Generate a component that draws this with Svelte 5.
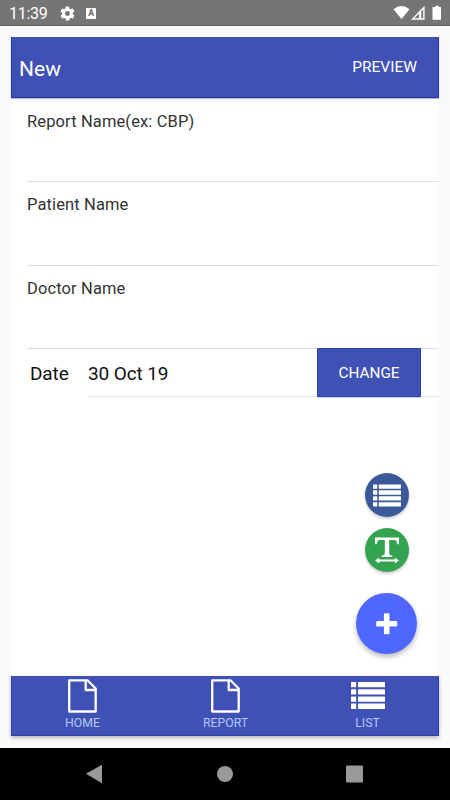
<script>
  const fields = ['Report Name(ex: CBP)', 'Patient Name', 'Doctor Name'];
  const tabs = [
    { label: 'HOME', icon: 'file' },
    { label: 'REPORT', icon: 'file' },
    { label: 'LIST', icon: 'list' }
  ];
</script>

{#snippet listIcon(width, height)}
  <svg {width} {height} viewBox="0 0 34 27" fill="#fff">
    {#each [0, 7.2, 14.4, 21.6] as y}
      <rect x="0" {y} width="5.2" height="5.3" rx=".5" />
      <rect x="7" {y} width="27" height="5.3" rx=".5" />
    {/each}
  </svg>
{/snippet}

<div class="screen">
  <div class="status">
    <span class="clock">11:39</span>
    <svg class="gear" width="17" height="17" viewBox="0 0 24 24" fill="#fff">
      <path d="M19.4 13c0-.3.1-.6.1-1s0-.7-.1-1l2.1-1.6c.2-.2.2-.4.1-.6l-2-3.5c-.1-.2-.4-.3-.6-.2l-2.5 1c-.5-.4-1.100-.7-1.700-1l-.4-2.600c0-.3-.2-.5-.5-.5h-4c-.2 0-.4.2-.5.4l-.4 2.700c-.6.200-1.200.600-1.700 1l-2.500-1c-.2-.1-.5 0-.6.200l-2 3.500c-.1.200-.1.400.1.600L4.600 11c0 .3-.1.700-.1 1s0 .7.1 1l-2.100 1.600c-.2.200-.2.400-.1.600l2 3.500c.1.200.4.300.6.200l2.500-1c.5.400 1.100.700 1.700 1l.4 2.600c0 .3.200.5.500.5h4c.200 0 .4-.2.500-.4l.4-2.700c.6-.2 1.200-.6 1.700-1l2.500 1c.2.100.5 0 .6-.2l2-3.500c.1-.2.100-.4-.1-.6zM12 15.500a3.500 3.500 0 1 1 0-7 3.500 3.500 0 0 1 0 7z" />
    </svg>
    <span class="keyboard">A</span>
    <svg class="signals" width="50" height="16" viewBox="0 0 50 16" fill="#fff">
      <path d="M.5 4.300Q8.500-2.500 16.500 4.300L8.500 14Z" />
      <path fill-rule="evenodd" d="M18 14.800 31.600.7V14.800ZM21.300 13.300H26V8.500ZM28.300 13.300H30.200V4.300L28.300 6.300Z" />
      <path d="M42.300.7H45.800V2H48V14.700H39.500V2H42.300Z" />
    </svg>
  </div>

  <main>
    <header>
      <h1>New</h1>
      <button class="preview">PREVIEW</button>
    </header>

    <section>
      {#each fields as name}
        <label><span>{name}</span></label>
      {/each}
      <div class="date">
        <span class="caption">Date</span>
        <div class="value">
          <span>30 Oct 19</span>
          <button class="change">CHANGE</button>
        </div>
      </div>
    </section>

    <div class="actions">
      <button class="small blue" aria-label="List">{@render listIcon(28, 23)}</button>
      <button class="small green" aria-label="Text width">
        <svg width="26" height="27" viewBox="0 0 26 27" fill="#fff">
          <path d="M1 .5H25V7.300H23.300L22.400 4Q22 2.900 20.500 2.900H15.200V16.300Q15.200 18 16.500 18.300L18.300 18.600V20H7.700V18.600L9.500 18.300Q10.800 18 10.800 16.300V2.900H5.500Q4 2.900 3.600 4L2.700 7.300H1Z" />
          <path d="M1 23.500 5.200 20.400V22.500H20.800V20.400L25 23.500 20.800 26.600V24.500H5.200V26.600Z" />
        </svg>
      </button>
      <button class="add" aria-label="Add">
        <svg width="22" height="22" viewBox="0 0 22 22" fill="#fff">
          <rect x="7.900" y=".3" width="5.600" height="21" rx="1.200" />
          <rect x=".2" y="7.900" width="21" height="5.600" rx="1.200" />
        </svg>
      </button>
    </div>

    <footer>
      {#each tabs as tab}
        <div class="tab">
          <div class="icon">
            {#if tab.icon === 'file'}
              <svg width="30" height="35" viewBox="0 0 30 35" fill="none" stroke="#fff" stroke-width="2.300" stroke-linejoin="round">
                <path d="M1.200 2.300H19.500L27.700 10.500V33.500H1.200ZM17.700 2.300V12H27.700" />
              </svg>
            {:else}
              {@render listIcon(34, 27)}
            {/if}
          </div>
          <span>{tab.label}</span>
        </div>
      {/each}
    </footer>
  </main>

  <nav>
    <svg width="450" height="52" viewBox="0 0 450 52" fill="#999">
      <path d="M86 25.700 101 17.200Q102 16.700 102 18V34Q102 35.300 101 34.700Z" />
      <circle cx="225" cy="26" r="8" />
      <rect x="346" y="17.500" width="17" height="17" rx="1" />
    </svg>
  </nav>
</div>

<style>
  .screen {
    width: 450px;
    height: 800px;
    display: flex;
    flex-direction: column;
    background: #fafafa;
    font-family: Roboto, sans-serif;
    overflow: hidden;
  }
  .status {
    height: 26px;
    box-sizing: border-box;
    flex: none;
    display: flex;
    align-items: center;
    padding: 0 7px 0 9px;
    background: #757575;
    border-bottom: 1px solid #606060;
    color: #fff;
  }
  .clock {
    width: 49.500px;
    font-size: 16px;
    line-height: 26px;
    letter-spacing: -.3px;
    padding-top: 2px;
  }
  .gear { margin-top: 1px; }
  .keyboard {
    width: 10px;
    height: 11px;
    margin: 2px 0 0 10.500px;
    border-radius: 1px;
    background: #fff;
    color: #666;
    font-size: 8.500px;
    font-weight: 700;
    line-height: 11px;
    text-align: center;
  }
  .signals { margin-left: auto; }
  main {
    position: relative;
    display: flex;
    flex-direction: column;
    height: 699px;
    margin: 11px 11px 0;
    background: #fff;
  }
  header {
    height: 61px;
    box-sizing: border-box;
    flex: none;
    display: flex;
    justify-content: space-between;
    align-items: center;
    padding: 0 22px 0 8px;
    background: #3f51b5;
    border: solid #1c35aa;
    border-width: 0 1px 1px;
    box-shadow: 0 1px 1px #bbc;
    color: #fff;
  }
  button {
    border: 0;
    padding: 0;
    font-family: inherit;
    color: #fff;
  }
  h1 {
    margin: 4px 0 0 -1px;
    font-size: 21px;
    font-weight: 400;
    letter-spacing: .1px;
  }
  .preview { background: none; font-size: 15.500px; margin-right: -1px; }
  section { flex: 1; }
  label {
    display: block;
    height: 83px;
    box-sizing: border-box;
    margin-left: 16px;
    padding-top: 13px;
    border-bottom: 1px solid #ddd;
    color: #333;
    font-size: 16.500px;
    line-height: 20px;
    letter-spacing: .12px;
  }
  label:first-child { height: 84px; padding-top: 14px; }
  label:nth-child(2) { height: 84px; }
  .date {
    display: flex;
    height: 48px;
    padding-left: 19px;
    font-size: 19px;
    letter-spacing: -.12px;
    line-height: 50px;
    color: #111;
  }
  .caption { width: 58px; }
  .value {
    flex: 1;
    display: flex;
    justify-content: space-between;
    border-bottom: 1px solid #e4e4e4;
    padding-right: 18px;
  }
  .change {
    width: 104px;
    height: 49px;
    box-sizing: border-box;
    margin-top: -1px;
    background: #3f51b5;
    border: 1px solid #2941b0;
    border-radius: 1px;
    box-shadow: 0 1px 1px #ccd;
    font-size: 15.300px;
    line-height: 49px;
  }
  .actions {
    position: absolute;
    right: 22px;
    bottom: 82px;
    display: flex;
    flex-direction: column;
    align-items: center;
  }
  .actions button {
    display: flex;
    align-items: center;
    justify-content: center;
    border-radius: 50%;
    box-shadow: 0 2px 3px #0003;
  }
  .actions .small { width: 44px; height: 44px; margin-bottom: 11px; }
  .blue { background: #3b5998; }
  .green { background: #34a34f; }
  .actions .add {
    width: 61px;
    height: 61px;
    margin-top: 10px;
    background: #5067ff;
    box-shadow: 0 3px 5px #0004;
  }
  footer {
    height: 60px;
    box-sizing: border-box;
    flex: none;
    display: flex;
    background: #3f51b5;
    border: solid #2a40ad;
    border-width: 0 1px 1px;
    box-shadow: 0 2px 4px #0004;
  }
  .tab {
    flex: 1;
    display: flex;
    flex-direction: column;
    align-items: center;
    color: #b3c7f9;
    font-size: 12.300px;
    line-height: 16px;
  }
  .tab:first-child { padding-right: 2px; }
  .tab:last-child { padding-left: 1px; }
  .icon {
    height: 39px;
    display: flex;
    align-items: center;
  }
  nav {
    height: 52px;
    flex: none;
    margin-top: auto;
    background: #000;
  }
  svg { display: block; flex: none; }
</style>
